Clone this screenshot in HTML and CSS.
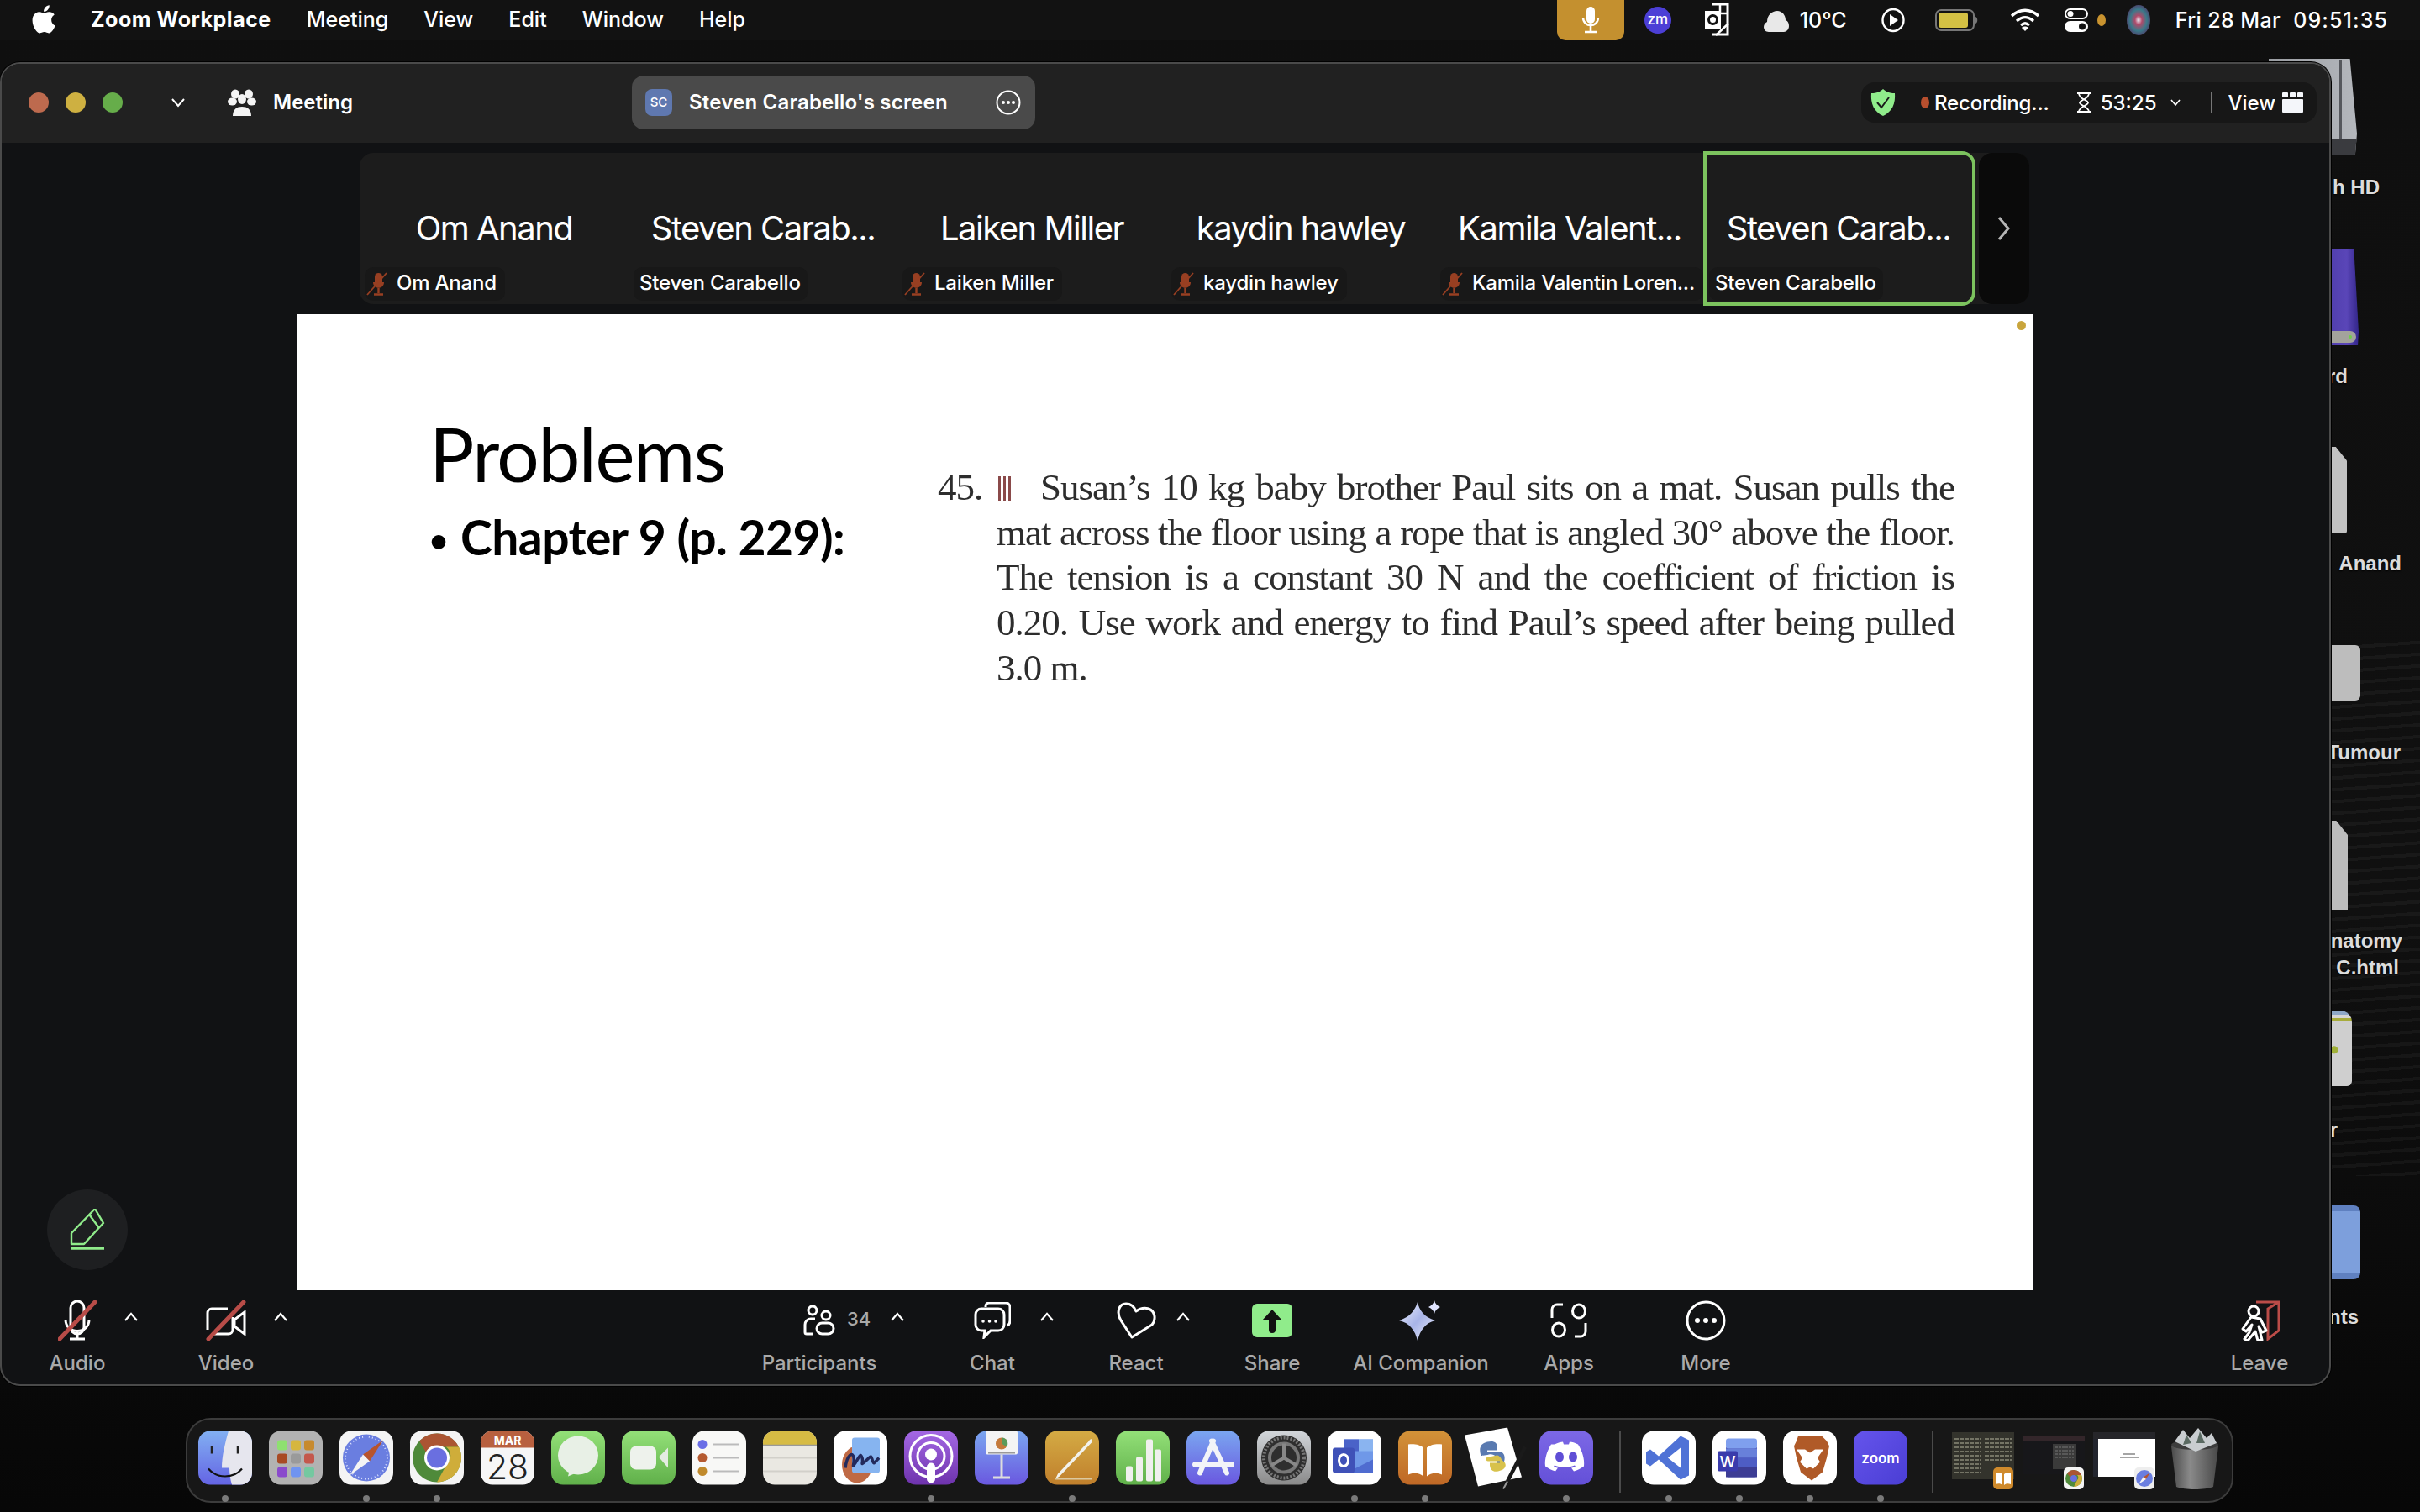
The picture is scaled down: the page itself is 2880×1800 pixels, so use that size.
FILE: index.html
```html
<!DOCTYPE html>
<html lang="en">
<head>
<meta charset="utf-8">
<title>Zoom Workplace</title>
<link rel="stylesheet" href="styles.css">
</head>
<body>
<div class="screen">
  <header class="menubar">
    <svg class="apple" width="30" height="34" viewBox="4 1 16 21"><path fill="#fff" d="M17.05 12.04c-.03-2.6 2.12-3.85 2.22-3.91-1.21-1.77-3.09-2.01-3.76-2.04-1.6-.16-3.12.94-3.93.94-.81 0-2.06-.92-3.39-.89-1.74.03-3.35 1.01-4.25 2.57-1.81 3.14-.46 7.79 1.3 10.34.86 1.25 1.89 2.65 3.24 2.6 1.3-.05 1.79-.84 3.36-.84 1.57 0 2.01.84 3.38.81 1.4-.02 2.28-1.27 3.14-2.53.99-1.45 1.4-2.85 1.42-2.93-.03-.01-2.72-1.04-2.75-4.13zM14.47 4.4c.72-.87 1.2-2.08 1.07-3.28-1.03.04-2.28.69-3.02 1.55-.66.77-1.24 2-1.09 3.18 1.15.09 2.32-.58 3.04-1.45z"/></svg>
    <nav class="menus">
      <span class="menu-app">Zoom Workplace</span>
      <span>Meeting</span><span>View</span><span>Edit</span><span>Window</span><span>Help</span>
    </nav>
    <div class="status">
      <div class="mic-pill"><svg width="24" height="32" viewBox="0 0 24 32"><rect x="7" y="0" width="10" height="20" rx="5" fill="#fff"/><path d="M3 13c0 12 18 12 18 0" fill="none" stroke="#fff" stroke-width="2.4"/><path d="M12 23v7M5 30h14" stroke="#fff" stroke-width="2.6"/></svg></div>
      <span class="zm">zm</span>
      <svg class="st-outlook" width="32" height="40" viewBox="0 0 32 40"><path d="M10 1h18v36H10" fill="none" stroke="#fff" stroke-width="3"/><path d="M12 12h16M19 1v11M14 38L29 24" stroke="#fff" stroke-width="2.5"/><rect x="1" y="9" width="19" height="21" fill="#fff"/><circle cx="10.500" cy="19.500" r="5" fill="none" stroke="#111" stroke-width="3"/></svg>
      <svg class="st-cloud" width="32" height="30" viewBox="0 0 32 30"><path fill="#e8e8e8" d="M7 29c-4 0-6-3-6-6 0-3 2-5 4-6 0-8 6-13 12-13 6 0 10 5 10 11 3 1 4 4 4 7 0 4-3 7-6 7z"/></svg>
      <span class="st-temp">10°C</span>
      <svg class="st-play" width="28" height="40" viewBox="0 0 28 40"><ellipse cx="14" cy="20" rx="12.500" ry="13" fill="none" stroke="#fff" stroke-width="2.4"/><path d="M10 13l10 7-10 7z" fill="#fff"/></svg>
      <svg class="st-batt" width="52" height="26" viewBox="0 0 52 26"><rect x="1" y="1" width="45" height="24" rx="6" fill="none" stroke="#777" stroke-width="2"/><rect x="4" y="4" width="35" height="18" rx="3" fill="#d4c144"/><path d="M48 9c3 1 3 7 0 8z" fill="#777"/></svg>
      <svg class="st-wifi" width="36" height="28" viewBox="0 0 36 28"><path d="M2 9c10-9 22-9 32 0M8 15c7-6 13-6 20 0M13 20c4-3 6-3 10 0" fill="none" stroke="#fff" stroke-width="3.400"/><path d="M18 27l-4-4c2-2 6-2 8 0z" fill="#fff"/></svg>
      <svg class="st-cc" width="28" height="28" viewBox="0 0 28 28"><rect x="1" y="1" width="26" height="11" rx="5.500" fill="none" stroke="#fff" stroke-width="2"/><circle cx="7" cy="6.500" r="3.500" fill="#fff"/><rect x="0" y="15" width="28" height="13" rx="6.500" fill="#fff"/><circle cx="21" cy="21.500" r="4" fill="#111"/></svg>
      <span class="st-dot"></span>
      <svg class="st-siri" width="28" height="38" viewBox="0 0 28 38"><defs><radialGradient id="siri"><stop offset="0" stop-color="#e8e8f0"/><stop offset=".3" stop-color="#b04a6a"/><stop offset=".7" stop-color="#3a7a8a"/><stop offset="1" stop-color="#4a4a70"/></radialGradient></defs><ellipse cx="14" cy="19" rx="14" ry="18" fill="url(#siri)"/></svg>
      <span class="st-date">Fri 28 Mar</span>
      <span class="st-time">09:51:35</span>
    </div>
  </header>

  <div class="desk-item hd"><i class="hd-plate"></i><i class="hd-foot"></i></div>
  <div class="desk-label lb-hd">h HD</div>
  <div class="desk-item drive"><i class="drive-foot"></i><i class="drive-led"></i></div>
  <div class="desk-label lb-rd">rd</div>
  <div class="desk-item doc-a"></div>
  <div class="desk-label lb-anand">Anand</div>
  <div class="desk-item sq"></div>
  <div class="desk-label lb-tum">Tumour</div>
  <div class="desk-item doc-b"></div>
  <div class="desk-label lb-nat">natomy</div>
  <div class="desk-label lb-cht">C.html</div>
  <div class="desk-item stack"></div>
  <div class="desk-label lb-r">r</div>
  <div class="desk-item folder"></div>
  <div class="desk-label lb-nts">nts</div>

  <main class="window">
    <div class="titlebar">
      <div class="title-left">
        <span class="light red"></span><span class="light yellow"></span><span class="light green"></span>
        <svg class="t-chev" width="18" height="12" viewBox="0 0 18 12"><path d="M2 2l7 8 7-8" fill="none" stroke="#fff" stroke-width="2"/></svg>
        <svg class="t-paw" width="34" height="32" viewBox="0 0 34 32"><g fill="#f4f4f4"><ellipse cx="9" cy="6" rx="5" ry="5.500"/><ellipse cx="25" cy="6" rx="5" ry="5.500"/><ellipse cx="17" cy="12" rx="5" ry="6"/><ellipse cx="5.500" cy="15" rx="5.500" ry="4.500"/><ellipse cx="28.500" cy="15" rx="5.500" ry="4.500"/><path d="M6 32c0-8 5-11 11-11s11 3 11 11z"/></g></svg>
        <span class="t-meeting">Meeting</span>
      </div>
      <div class="share-pill">
        <span class="avatar">SC</span>
        <span class="share-name">Steven Carabello's screen</span>
        <svg class="share-more" width="30" height="30" viewBox="0 0 30 30"><circle cx="15" cy="15" r="13.500" fill="none" stroke="#fff" stroke-width="2"/><circle cx="9" cy="15" r="2" fill="#fff"/><circle cx="15" cy="15" r="2" fill="#fff"/><circle cx="21" cy="15" r="2" fill="#fff"/></svg>
      </div>
      <div class="rec-pill">
        <svg class="shield" width="30" height="32" viewBox="0 0 30 32"><path d="M15 0c3 3 8 5 14 5 1 12-3 22-14 27C4 27 0 17 1 5c6 0 11-2 14-5z" fill="#90ec8b"/><path d="M8 16l5 6 9-12" fill="none" stroke="#1a1a1a" stroke-width="2"/></svg>
        <span class="rec-dot"></span>
        <span class="rec-text">Recording...</span>
        <svg class="hour" width="18" height="26" viewBox="0 0 18 24"><path d="M1 1h16M1 23h16M3 1c0 7 10 8 11 11S3 17 3 23M15 1c0 7-10 8-11 11s11 5 11 11" fill="none" stroke="#fff" stroke-width="1.800"/></svg>
        <span class="rec-time">53:25</span>
        <svg class="rec-chev" width="12" height="8" viewBox="0 0 12 8"><path d="M1 1l5 6 5-6" fill="none" stroke="#fff" stroke-width="1.600"/></svg>
        <span class="rec-div"></span>
        <span class="rec-view">View</span>
        <svg class="rec-grid" width="25" height="24" viewBox="0 0 25 24"><g fill="#f4f6fa"><rect width="7" height="6" rx="1"/><rect x="9" width="7" height="6" rx="1"/><rect x="18" width="7" height="6" rx="1"/><rect y="8" width="25" height="16" rx="1"/></g></svg>
      </div>
    </div>

    <div class="stage">
      <div class="strip">
        <div class="tile">
          <div class="tile-name">Om Anand</div>
          <div class="tile-label"><svg class="muted" width="26" height="28" viewBox="0 0 26 28"><use href="#mutedmic"/></svg><span>Om Anand</span></div>
        </div>
        <div class="tile">
          <div class="tile-name">Steven Carab...</div>
          <div class="tile-label plain"><span>Steven Carabello</span></div>
        </div>
        <div class="tile">
          <div class="tile-name">Laiken Miller</div>
          <div class="tile-label"><svg class="muted" width="26" height="28" viewBox="0 0 26 28"><use href="#mutedmic"/></svg><span>Laiken Miller</span></div>
        </div>
        <div class="tile">
          <div class="tile-name">kaydin hawley</div>
          <div class="tile-label"><svg class="muted" width="26" height="28" viewBox="0 0 26 28"><use href="#mutedmic"/></svg><span>kaydin hawley</span></div>
        </div>
        <div class="tile">
          <div class="tile-name">Kamila Valent...</div>
          <div class="tile-label"><svg class="muted" width="26" height="28" viewBox="0 0 26 28"><use href="#mutedmic"/></svg><span>Kamila Valentin Loren...</span></div>
        </div>
        <div class="tile active">
          <div class="tile-name">Steven Carab...</div>
          <div class="tile-label plain"><span>Steven Carabello</span></div>
        </div>
        <div class="strip-next"><svg width="16" height="30" viewBox="0 0 16 30"><path d="M2 2l11 13L2 28" fill="none" stroke="#b5b5b5" stroke-width="3"/></svg></div>
      </div>

      <div class="slide">
        <span class="slide-dot"></span>
        <div class="slide-left">
          <div class="slide-title">Problems</div>
          <div class="slide-bullet"><span class="bul">•</span>Chapter 9 (p. 229):</div>
        </div>
        <div class="slide-right">
          <div class="ln first"><span class="num">45.</span><span class="bars"><i></i></span>Susan’s 10 kg baby brother Paul sits on a mat. Susan pulls the</div>
          <div class="ln">mat across the floor using a rope that is angled 30° above the floor.</div>
          <div class="ln">The tension is a constant 30 N and the coefficient of friction is</div>
          <div class="ln">0.20. Use work and energy to find Paul’s speed after being pulled</div>
          <div class="ln last">3.0 m.</div>
        </div>
      </div>

      <div class="pen-btn"><svg width="44" height="50" viewBox="0 0 44 50"><path d="M31 1l10 17-23 25H3V30z M25 9l11 15" fill="none" stroke="#90ec8b" stroke-width="2.400" stroke-linejoin="round" transform="translate(0 -1)"/><path d="M2 47h40" stroke="#90ec8b" stroke-width="3.500"/></svg></div>
    </div>

    <div class="toolbar">
      <div class="tool w-audio">
        <div class="tool-icon">
          <svg width="46" height="48" viewBox="0 0 46 48"><path d="M15 32V9a8 8 0 0 1 16 0v23a8 8 0 0 1-16 0z" fill="none" stroke="#fff" stroke-width="3"/><path d="M9 23c0 18 28 18 28 0M23 37v9M14 46h18" fill="none" stroke="#fff" stroke-width="3"/><path d="M2 46L44 2" stroke="#b84c48" stroke-width="5" stroke-linecap="round"/></svg>
          <svg class="chev chev-audio" width="18" height="12" viewBox="0 0 18 12"><path d="M2 10l7-8 7 8" fill="none" stroke="#fff" stroke-width="2.200"/></svg>
        </div>
        <div class="tool-label">Audio</div>
      </div>
      <div class="tool w-video">
        <div class="tool-icon">
          <svg width="48" height="48" viewBox="0 0 48 48"><path d="M26 10h-19a5 5 0 0 0-5 5v20M8 40h19a5 5 0 0 0 5-5V20M46 14v26L34 31V23z" fill="none" stroke="#fff" stroke-width="3"/><path d="M3 46L45 2" stroke="#b84c48" stroke-width="5" stroke-linecap="round"/></svg>
          <svg class="chev chev-video" width="18" height="12" viewBox="0 0 18 12"><path d="M2 10l7-8 7 8" fill="none" stroke="#fff" stroke-width="2.200"/></svg>
        </div>
        <div class="tool-label">Video</div>
      </div>
      <div class="center-tools">
        <div class="tool w-part">
          <div class="tool-icon">
            <svg width="38" height="36" viewBox="0 0 38 36"><circle cx="11" cy="6" r="5" fill="none" stroke="#fff" stroke-width="3"/><circle cx="27" cy="12" r="5" fill="none" stroke="#fff" stroke-width="3"/><path d="M14 16H9a7 7 0 0 0-7 7v9a2 2 0 0 0 2 2h8" fill="none" stroke="#fff" stroke-width="3"/><rect x="16" y="21" width="20" height="13" rx="6.500" fill="none" stroke="#fff" stroke-width="3"/></svg>
            <span class="tool-count">34</span>
            <svg class="chev chev-part" width="18" height="12" viewBox="0 0 18 12"><path d="M2 10l7-8 7 8" fill="none" stroke="#fff" stroke-width="2.200"/></svg>
          </div>
          <div class="tool-label">Participants</div>
        </div>
        <div class="tool w-chat">
          <div class="tool-icon">
            <svg width="44" height="44" viewBox="0 0 44 44"><path d="M14 6V5a4 4 0 0 1 4-4h20a5 5 0 0 1 5 5v16c0 3-1 5-3 6" fill="none" stroke="#fff" stroke-width="3"/><path d="M9 8h20a7 7 0 0 1 7 7v12a7 7 0 0 1-7 7H20l-8 8 1-8H9a7 7 0 0 1-7-7V15a7 7 0 0 1 7-7z" fill="none" stroke="#fff" stroke-width="3"/><circle cx="11" cy="23" r="1.800" fill="#fff"/><circle cx="18.500" cy="23" r="1.800" fill="#fff"/><circle cx="26" cy="23" r="1.800" fill="#fff"/></svg>
            <svg class="chev chev-chat" width="18" height="12" viewBox="0 0 18 12"><path d="M2 10l7-8 7 8" fill="none" stroke="#fff" stroke-width="2.200"/></svg>
          </div>
          <div class="tool-label">Chat</div>
        </div>
        <div class="tool w-react">
          <div class="tool-icon">
            <svg width="48" height="44" viewBox="0 0 48 44"><path d="M19 42L6 22C0 12 4 2 12 2c6 0 10 4 12 9 4-3 9-5 15-3 8 3 9 13 4 19z" fill="none" stroke="#fff" stroke-width="3" stroke-linejoin="round"/></svg>
            <svg class="chev chev-react" width="18" height="12" viewBox="0 0 18 12"><path d="M2 10l7-8 7 8" fill="none" stroke="#fff" stroke-width="2.200"/></svg>
          </div>
          <div class="tool-label">React</div>
        </div>
        <div class="tool w-share">
          <div class="tool-icon">
            <svg width="48" height="40" viewBox="0 0 48 40"><rect width="48" height="40" rx="6" fill="#90ec8b"/><path d="M24 7l12 13h-8v11a3 3 0 0 1-8 0V20h-8z" fill="#111"/></svg>
          </div>
          <div class="tool-label">Share</div>
        </div>
        <div class="tool w-ai">
          <div class="tool-icon">
            <svg width="54" height="48" viewBox="0 0 54 48"><defs><linearGradient id="aig" x1="0" y1="0" x2="1" y2="1"><stop offset="0" stop-color="#f2f4ff"/><stop offset=".5" stop-color="#a8b4e8"/><stop offset="1" stop-color="#eef0fa"/></linearGradient></defs><path d="M23 2c2 10 8 18 21 22-12 3-18 12-21 24-3-12-9-21-22-24C14 20 20 12 23 2z" fill="url(#aig)"/><path d="M43 0c1 4 3 6 7 8-4 2-6 4-7 8-1-4-3-6-7-8 4-2 6-4 7-8z" fill="#dfe4ff"/></svg>
          </div>
          <div class="tool-label">AI Companion</div>
        </div>
        <div class="tool w-apps">
          <div class="tool-icon">
            <svg width="44" height="42" viewBox="0 0 44 42"><path d="M2 18V8a6 6 0 0 1 6-6h7M42 24v10a6 6 0 0 1-6 6h-7" fill="none" stroke="#fff" stroke-width="3"/><ellipse cx="34" cy="10" rx="7.500" ry="8" fill="none" stroke="#fff" stroke-width="3"/><ellipse cx="10" cy="32" rx="7.500" ry="8" fill="none" stroke="#fff" stroke-width="3"/></svg>
          </div>
          <div class="tool-label">Apps</div>
        </div>
        <div class="tool w-more">
          <div class="tool-icon">
            <svg width="48" height="48" viewBox="0 0 48 48"><circle cx="24" cy="24" r="22" fill="none" stroke="#fff" stroke-width="3"/><circle cx="14" cy="24" r="3" fill="#fff"/><circle cx="24" cy="24" r="3" fill="#fff"/><circle cx="34" cy="24" r="3" fill="#fff"/></svg>
          </div>
          <div class="tool-label">More</div>
        </div>
      </div>
      <div class="tool w-leave">
        <div class="tool-icon">
          <svg width="48" height="48" viewBox="0 0 48 48"><path d="M20 2h27v34L34 46V10L47 2" fill="none" stroke="#bb4c48" stroke-width="3"/><circle cx="17" cy="13" r="6" fill="none" stroke="#fff" stroke-width="3"/><path d="M14 20l-10 14 4 3 7-8-3 9-6 8 4 2 9-11 3 11 5-1-4-16 4 7 5-2-7-14z" fill="none" stroke="#fff" stroke-width="3" stroke-linejoin="round"/></svg>
        </div>
        <div class="tool-label">Leave</div>
      </div>
    </div>
  </main>

  <footer class="dock">
    <div class="app"><svg viewBox="0 0 64 64"><defs><linearGradient id="fb" x1="0" y1="0" x2="0" y2="1"><stop offset="0" stop-color="#82b0f2"/><stop offset="1" stop-color="#6464e4"/></linearGradient></defs><rect width="64" height="64" rx="14" fill="url(#fb)"/><path d="M36 0h14a14 14 0 0 1 14 14v36a14 14 0 0 1-14 14H40c-2-6-3-14-3-20H28c0-14 4-30 8-44z" fill="#e6e6ee"/><path d="M16 18v9M47 18v9" stroke="#222" stroke-width="2.500"/><path d="M12 45c10 12 30 12 40 0" fill="none" stroke="#111" stroke-width="2.200"/></svg><i class="run"></i></div>
    <div class="app"><svg viewBox="0 0 64 64"><rect width="64" height="64" rx="14" fill="#b2b2b2"/><g><rect x="10" y="11" width="12" height="12" rx="3" fill="#8ee070"/><rect x="26" y="11" width="12" height="12" rx="3" fill="#d6b63e"/><rect x="42" y="11" width="12" height="12" rx="3" fill="#c78a2e"/><rect x="10" y="27" width="12" height="12" rx="3" fill="#a84a24"/><rect x="26" y="27" width="12" height="12" rx="3" fill="#9a9a9a"/><rect x="42" y="27" width="12" height="12" rx="3" fill="#c4584c"/><rect x="10" y="43" width="12" height="12" rx="3" fill="#8a4acc"/><rect x="26" y="43" width="12" height="12" rx="3" fill="#7094f0"/><rect x="42" y="43" width="12" height="12" rx="3" fill="#74c8a0"/></g></svg></div>
    <div class="app"><svg viewBox="0 0 64 64"><rect width="64" height="64" rx="14" fill="#f4f4f4"/><ellipse cx="32" cy="32" rx="28" ry="28" fill="#6a7ee0"/><circle cx="32" cy="32" r="25" fill="none" stroke="#dfe5ff" stroke-width="2" stroke-dasharray="1 3"/><path d="M52 11L36 36 28 28z" fill="#b8542c"/><path d="M12 53l16-25 8 8z" fill="#f4f4f4"/></svg><i class="run"></i></div>
    <div class="app"><svg viewBox="0 0 64 64"><rect width="64" height="64" rx="14" fill="#f4f4f4"/><circle cx="32" cy="32" r="29" fill="#4f8a3a"/><path d="M32 3a29 29 0 0 1 26 16H32a13 13 0 0 0-12 8L11 12A29 29 0 0 1 32 3z" fill="#ab5533"/><path d="M58 19a29 29 0 0 1-26 42l12-22a13 13 0 0 0-1-20z" fill="#cfad3a"/><circle cx="32" cy="32" r="15" fill="#fff"/><circle cx="32" cy="32" r="12" fill="#6a6fe0"/></svg><i class="run"></i></div>
    <div class="app"><svg viewBox="0 0 64 64"><rect width="64" height="64" rx="14" fill="#f6f6f6"/><path d="M0 20V14A14 14 0 0 1 14 0h36a14 14 0 0 1 14 14v6z" fill="#b8603f"/><text x="32" y="16" text-anchor="middle" class="cal-mon">MAR</text><text x="32" y="57" text-anchor="middle" class="cal-day">28</text></svg></div>
    <div class="app"><svg viewBox="0 0 64 64"><defs><linearGradient id="gr" x1="0" y1="0" x2="0" y2="1"><stop offset="0" stop-color="#93e078"/><stop offset="1" stop-color="#60b04a"/></linearGradient></defs><rect width="64" height="64" rx="14" fill="url(#gr)"/><ellipse cx="32" cy="29" rx="24" ry="23" fill="#e8f0e6"/><path d="M22 46l-2 8 12-5z" fill="#e8f0e6"/></svg></div>
    <div class="app"><svg viewBox="0 0 64 64"><rect width="64" height="64" rx="14" fill="url(#gr)"/><rect x="10" y="18" width="31" height="28" rx="7" fill="#eef2ec"/><path d="M44 31l11-11v24z" fill="#e4ece2"/></svg></div>
    <div class="app"><svg viewBox="0 0 64 64"><rect width="64" height="64" rx="14" fill="#f8f8f6"/><circle cx="12" cy="16" r="5.500" fill="#6a6ee6"/><circle cx="12" cy="32" r="5.500" fill="#b55a30"/><circle cx="12" cy="48" r="5.500" fill="#c08a2c"/><path d="M24 16h32M24 32h32M24 48h32" stroke="#bbb" stroke-width="2"/></svg></div>
    <div class="app"><svg viewBox="0 0 64 64"><rect width="64" height="64" rx="14" fill="#eae8e2"/><path d="M0 17V14A14 14 0 0 1 14 0h36a14 14 0 0 1 14 14v3z" fill="#d6bb44"/><path d="M0 17h64" stroke="#999" stroke-width="1.500"/><path d="M0 32h64M0 48h64" stroke="#d2d0ca" stroke-width="2"/></svg></div>
    <div class="app"><svg viewBox="0 0 64 64"><rect width="64" height="64" rx="14" fill="#fff"/><ellipse cx="28" cy="40" rx="18" ry="22" fill="#bf6a45"/><rect x="22" y="8" width="33" height="42" rx="3" fill="#86b4f0"/><path d="M14 44c2-16 9-20 10-12s-3 14 2 6 6-12 8-6-3 10 4 4 6-8 8-2 1 6 8-2" fill="none" stroke="#232a5c" stroke-width="3.500"/></svg></div>
    <div class="app"><svg viewBox="0 0 64 64"><defs><linearGradient id="pu" x1="0" y1="0" x2="0" y2="1"><stop offset="0" stop-color="#a468e4"/><stop offset="1" stop-color="#6e33ad"/></linearGradient></defs><rect width="64" height="64" rx="14" fill="url(#pu)"/><circle cx="32" cy="30" r="25" fill="none" stroke="#fff" stroke-width="3"/><circle cx="32" cy="30" r="16" fill="none" stroke="#fff" stroke-width="3"/><circle cx="32" cy="28" r="7" fill="#fff"/><rect x="27" y="38" width="10" height="24" rx="5" fill="#fff"/></svg><i class="run"></i></div>
    <div class="app"><svg viewBox="0 0 64 64"><defs><linearGradient id="bl" x1="0" y1="0" x2="0" y2="1"><stop offset="0" stop-color="#7aa6f0"/><stop offset="1" stop-color="#6a58e0"/></linearGradient></defs><rect width="64" height="64" rx="14" fill="url(#bl)"/><rect x="13" y="0" width="38" height="28" rx="2" fill="#f4f4f4"/><circle cx="32" cy="15" r="7" fill="#c47a3c"/><path d="M32 15V8a7 7 0 0 1 6 11z" fill="#5a9a5a"/><path d="M16 26h32" stroke="#999" stroke-width="2"/><path d="M32 28v28" stroke="#ddd" stroke-width="3"/><rect x="22" y="54" width="20" height="3" fill="#ddd"/></svg></div>
    <div class="app"><svg viewBox="0 0 64 64"><defs><linearGradient id="or" x1="0" y1="0" x2="0" y2="1"><stop offset="0" stop-color="#d4ab44"/><stop offset="1" stop-color="#c07f2c"/></linearGradient></defs><rect width="64" height="64" rx="14" fill="url(#or)"/><path d="M52 12c2-4 5-2 3 2L17 54l-5 3 3-6z" fill="#f2f2ec"/><path d="M12 57h44" stroke="#dcc9a0" stroke-width="2"/></svg><i class="run"></i></div>
    <div class="app"><svg viewBox="0 0 64 64"><rect width="64" height="64" rx="14" fill="url(#gr)"/><rect x="12" y="42" width="8" height="18" rx="2" fill="#f0f0ee"/><rect x="24" y="31" width="8" height="29" rx="2" fill="#f0f0ee"/><rect x="36" y="10" width="8" height="50" rx="2" fill="#f0f0ee"/><rect x="46" y="22" width="8" height="38" rx="2" fill="#f0f0ee"/></svg></div>
    <div class="app"><svg viewBox="0 0 64 64"><rect width="64" height="64" rx="14" fill="url(#bl)"/><path d="M32 12l-16 38M30 12l18 38M10 40h44" stroke="#f2f4f8" stroke-width="6" stroke-linecap="round" fill="none"/></svg></div>
    <div class="app"><svg viewBox="0 0 64 64"><defs><linearGradient id="gy" x1="0" y1="0" x2="0" y2="1"><stop offset="0" stop-color="#d2d6da"/><stop offset="1" stop-color="#8a8a8a"/></linearGradient></defs><rect width="64" height="64" rx="14" fill="url(#gy)"/><circle cx="32" cy="32" r="27" fill="#2e2e2e"/><circle cx="32" cy="32" r="24" fill="none" stroke="#777" stroke-width="4" stroke-dasharray="2 2"/><circle cx="32" cy="32" r="17" fill="none" stroke="#777" stroke-width="4"/><path d="M32 32V15M32 32l15 9M32 32l-15 9" stroke="#888" stroke-width="4"/></svg></div>
    <div class="app"><svg viewBox="0 0 64 64"><rect width="64" height="64" rx="14" fill="#fff"/><path d="M20 10h34v40H22z" fill="#6f98e8"/><path d="M20 10h17v14H20z" fill="#4a62c8"/><path d="M37 10h17v14H37z" fill="#8ab4f0"/><path d="M22 50l32-16v16z" fill="#4f6cd0"/><rect x="6" y="20" width="26" height="30" rx="3" fill="#3f51b8"/><ellipse cx="19" cy="35" rx="5.500" ry="7" fill="none" stroke="#fff" stroke-width="3"/></svg><i class="run"></i></div>
    <div class="app"><svg viewBox="0 0 64 64"><defs><linearGradient id="bk" x1="0" y1="0" x2="0" y2="1"><stop offset="0" stop-color="#d29238"/><stop offset="1" stop-color="#bf6826"/></linearGradient></defs><rect width="64" height="64" rx="14" fill="url(#bk)"/><path d="M30 20c-4-4-12-5-18-4v36c6-3 14-2 18 2zM34 20c4-4 12-5 18-4v36c-6-3-14-2-18 2z" fill="#fff"/></svg><i class="run"></i></div>
    <div class="app"><svg viewBox="0 0 64 64"><path d="M-5 5l51-9 17 59-52 11z" fill="#fff"/><path d="M22 13c8-2 12 1 12 7v3H22v2h15c6 0 7 8 4 14H33v-6c0-4-5-6-9-5s-9 2-10 0c-2-8 0-13 8-15z" fill="#5a7ab0"/><path d="M38 47c-7 3-12 1-13-6v-3h12v-2H23c-2 0-3-2-3-4l13-3c3 0 5 2 6 5l4 4c2 4 0 7-5 9z" fill="#d8c24c"/><path d="M67 19L46 60" stroke="#1a1a1a" stroke-width="4.500"/><path d="M46 60l-5 9" stroke="#999" stroke-width="2"/></svg></div>
    <div class="app"><svg viewBox="0 0 64 64"><defs><linearGradient id="dc" x1="0" y1="0" x2="0" y2="1"><stop offset="0" stop-color="#7c68e6"/><stop offset="1" stop-color="#6450d8"/></linearGradient></defs><rect width="64" height="64" rx="14" fill="url(#dc)"/><path d="M18 16c4-2 8-3 10-3l1 3c2 0 4 0 6 0l1-3c3 0 6 1 10 3 5 8 8 17 7 26-4 3-8 5-12 6l-3-4c2 0 3-1 5-2l-1-1c-8 3-16 3-24 0l-1 1c2 1 3 2 5 2l-3 4c-4-1-8-3-12-6-1-9 2-18 7-26z" fill="#fff"/><ellipse cx="24" cy="31" rx="5" ry="6" fill="#5f4ed6"/><ellipse cx="40" cy="31" rx="5" ry="6" fill="#5f4ed6"/></svg><i class="run"></i></div>
    <span class="dock-sep"></span>
    <div class="app"><svg viewBox="0 0 64 64"><rect width="64" height="64" rx="14" fill="#fff"/><path d="M46 6l10 5v42l-10 5-26-24-10 8-5-3V25l5-3 10 8z M46 20L31 32l15 12z" fill="#4f72d6" fill-rule="evenodd"/></svg><i class="run"></i></div>
    <div class="app"><svg viewBox="0 0 64 64"><rect width="64" height="64" rx="14" fill="#fff"/><rect x="16" y="18" width="37" height="37" rx="3" fill="#4b52b4"/><rect x="16" y="9" width="37" height="12" rx="3" fill="#7f9fee"/><rect x="16" y="21" width="37" height="11" fill="#6880da"/><rect x="16" y="32" width="37" height="11" fill="#4e5dc4"/><rect x="16" y="43" width="37" height="12" fill="#3d3d94"/><rect x="6" y="24" width="24" height="24" rx="2" fill="#3a3bac"/><text x="18" y="43" text-anchor="middle" class="word-w">W</text></svg><i class="run"></i></div>
    <div class="app"><svg viewBox="0 0 64 64"><rect width="64" height="64" rx="14" fill="#fff"/><path d="M18 6h28l6 6 3 6-3 14-5 17-13 10-13-10-5-17-3-14 3-6z" fill="#b05a28"/><path d="M16 22h10l6 4 6-4h10l-7 10 3 5-12 12-12-12 3-5z" fill="#fff"/><path d="M26 46l6-3 6 3-6 5z" fill="#b05a28"/></svg><i class="run"></i></div>
    <div class="app"><svg viewBox="0 0 64 64"><defs><linearGradient id="zm" x1="0" y1="0" x2="1" y2="1"><stop offset="0" stop-color="#6554ec"/><stop offset="1" stop-color="#4a3ed4"/></linearGradient></defs><rect width="64" height="64" rx="14" fill="url(#zm)"/><text x="32" y="38" text-anchor="middle" class="zoom-word">zoom</text></svg><i class="run"></i></div>
    <span class="dock-sep sep2"></span>
    <div class="app thumb"><svg viewBox="0 0 74 68"><rect y="0" width="74" height="56" fill="#33332c"/><path d="M3 8h32M3 13h32M3 18h32M3 23h32M3 28h32M3 33h32M3 38h32M3 43h32M3 48h32M39 8h32M39 13h32M39 18h32M39 23h32M39 28h32M39 33h32" stroke="#8a8a78" stroke-width="1.500" stroke-dasharray="5 1"/><g transform="translate(49 42)"><rect width="24" height="26" rx="5" fill="#cf8a2c"/><path d="M11 8c-2-2-5-2-8-2v14c3-1 6-1 8 1zM13 8c2-2 5-2 8-2v14c-3-1-6-1-8 1z" fill="#fff"/></g></svg></div>
    <div class="app thumb"><svg viewBox="0 0 74 68"><rect y="4" width="74" height="46" fill="#17171a"/><rect y="4" width="74" height="7" fill="#33262a"/><rect x="36" y="14" width="28" height="30" fill="#3a3a3a"/><path d="M39 18h22M39 22h22M39 26h22M39 30h22" stroke="#777" stroke-width="1" stroke-dasharray="3 1"/><g transform="translate(49 42)"><rect width="24" height="26" rx="5" fill="#f4f4f4"/><circle cx="12" cy="13" r="10" fill="#4f8a3a"/><path d="M12 3a10 10 0 0 1 9 6H12a4 4 0 0 0-4 3L4 7a10 10 0 0 1 8-4z" fill="#ab5533"/><path d="M21 9a10 10 0 0 1-9 14l4-8a4 4 0 0 0 0-6z" fill="#cfad3a"/><circle cx="12" cy="13" r="4" fill="#6a6fe0"/></g></svg></div>
    <div class="app thumb"><svg viewBox="0 0 74 68"><rect y="0" width="74" height="8" fill="#26262a"/><rect y="8" width="74" height="45" fill="#fff"/><rect y="8" width="6" height="45" fill="#22252e"/><path d="M36 26h14M32 30h22" stroke="#888" stroke-width="1.500"/><g transform="translate(49 42)"><rect width="24" height="26" rx="5" fill="#eee"/><circle cx="12" cy="13" r="10" fill="#6a7ee0"/><path d="M19 6L13 15 10 12z" fill="#b8542c"/><path d="M5 20l6-9 3 3z" fill="#f4f4f4"/></g></svg></div>
    <div class="app app-trash"><svg viewBox="0 0 64 76"><defs><linearGradient id="tr" x1="0" y1="0" x2="1" y2="0"><stop offset="0" stop-color="#4a4a4a"/><stop offset=".4" stop-color="#8a8a8a"/><stop offset="1" stop-color="#484848"/></linearGradient></defs><path d="M4 24h56l-6 48c-10 4-34 4-44 0z" fill="url(#tr)"/><ellipse cx="32" cy="22" rx="28" ry="6" fill="#3d3d3d"/><path d="M8 18l10-14 8 10 10-12 10 12 6-6 6 12-25 10z" fill="#c9cdd0"/><path d="M22 10l6 10-10 2zM38 6l6 14-10 0z" fill="#5a6a62"/></svg></div>
  </footer>

  <svg class="sprite" width="0" height="0"><defs><g id="mutedmic"><rect x="10" y="1" width="9" height="15" rx="4.500" fill="#983f22"/><path d="M8 12c0 9 13 9 13 0z" fill="#983f22"/><path d="M14.500 19v6M9 26.500h11" stroke="#983f22" stroke-width="2.400"/><path d="M1 27L24 1" stroke="#983f22" stroke-width="1.800"/></g></defs></svg>
</div>
</body>
</html>
```

FILE: styles.css
```css
* { box-sizing: border-box; }
html, body { margin: 0; padding: 0; background: #0a0a0a; }
body { font-family: Inter, "Noto Sans", "Liberation Sans", sans-serif; color: #fff; overflow: hidden; }

.screen {
  position: relative;
  width: 2880px;
  height: 1800px;
  overflow: hidden;
  background:
    repeating-linear-gradient(176deg, rgba(255,255,255,0) 0 10px, rgba(255,255,255,.04) 10px 14px) 2775px 760px / 105px 640px no-repeat,
    linear-gradient(180deg, #0f0f0f 0%, #101010 60%, #070707 100%);
}
.sprite { position: absolute; }

/* menu bar */
.menubar { display: flex; align-items: center; height: 48px; background: #121212; padding-left: 38px; }
.apple { flex: none; margin-top: -2px; }
.menus { display: flex; margin-left: 40px; font-size: 25px; font-weight: 500; gap: 42px; margin-top: -2px; }
.menu-app { font-weight: 700; letter-spacing: .5px; }
.status { display: flex; align-items: center; margin-left: auto; padding-right: 38px; height: 48px; font-size: 25px; font-weight: 500; }
.mic-pill { width: 80px; height: 48px; background: #c4902f; border-radius: 0 0 10px 10px; display: flex; align-items: center; justify-content: center; }
.zm { width: 32px; height: 32px; margin-left: 24px; border-radius: 50%; background: #4c3fd6; font-size: 17px; line-height: 30px; text-align: center; }
.st-outlook { margin-left: 39px; }
.st-cloud { margin-left: 38px; }
.st-temp { margin-left: 12px; }
.st-play { margin-left: 41px; }
.st-batt { margin-left: 36px; }
.st-wifi { margin-left: 37px; }
.st-cc { margin-left: 29px; }
.st-dot { width: 10px; height: 14px; border-radius: 50%; background: #c9932f; margin-left: 11px; }
.st-siri { margin-left: 25px; }
.st-date { margin-left: 30px; letter-spacing: .4px; }
.st-time { margin-left: 15px; letter-spacing: 1.1px; }

/* desktop items */
.desk-item { position: absolute; display: block; }
.desk-label { position: absolute; right: 0; font-family: "Liberation Sans", sans-serif; font-weight: 700; font-size: 24px; line-height: 30px; color: #dcdcdc; text-shadow: 0 1px 2px #000; }
.hd { left: 2700px; top: 70px; width: 105px; height: 114px; background: linear-gradient(90deg, #9a9da2, #b4b7bc); clip-path: polygon(0 0, 92% 0, 100% 78%, 98% 100%, 0 100%); }
.hd-plate { position: absolute; left: 0; right: 0; bottom: 0; height: 18px; background: #3a3b3f; }
.hd-foot { position: absolute; right: 18px; top: 2px; bottom: 18px; width: 3px; background: #55575c; }
.drive { left: 2760px; top: 297px; width: 47px; height: 114px; background: linear-gradient(90deg, #4a3aa6, #5a46b8 70%, #33268a); clip-path: polygon(0 0, 88% 0, 100% 86%, 98% 100%, 0 100%); }
.drive-foot { position: absolute; left: 0; right: 3px; bottom: 3px; height: 14px; background: #a3a39c; border-radius: 0 8px 8px 0; }
.drive-led { position: absolute; right: 8px; bottom: 8px; width: 4px; height: 4px; border-radius: 50%; background: #6fd04a; }
.doc-a { left: 2760px; top: 532px; width: 33px; height: 103px; background: #c2c2c2; border-radius: 0 0 3px 0; clip-path: polygon(0 0, 60% 0, 100% 16%, 100% 100%, 0 100%); }
.sq { left: 2760px; top: 768px; width: 49px; height: 66px; background: #bdbdbd; border-radius: 6px; }
.doc-b { left: 2760px; top: 977px; width: 34px; height: 106px; background: #bcbcbc; clip-path: polygon(0 0, 60% 0, 100% 16%, 100% 100%, 0 100%); }
.stack { left: 2760px; top: 1203px; width: 39px; height: 90px; background: radial-gradient(circle at 46% 52%, #a0b038 0 4px, transparent 5px), linear-gradient(180deg, #8ea8c8 0 6%, #d6d6d6 6% 10%, #a8ac3c 10% 13%, #cfcfcf 13%); border-radius: 0 14px 6px 0; }
.folder { left: 2760px; top: 1435px; width: 49px; height: 88px; background: linear-gradient(180deg, #5f80c0 0 8%, #7d9fdc 8% 92%, #5f80c0 92%); border-radius: 8px; }
.lb-hd { right: 48px; top: 208px; }
.lb-rd { right: 86px; top: 433px; }
.lb-anand { right: 22px; top: 656px; }
.lb-tum { right: 23px; top: 881px; }
.lb-nat { right: 21px; top: 1105px; }
.lb-cht { right: 25px; top: 1137px; }
.lb-r { right: 98px; top: 1330px; }
.lb-nts { right: 73px; top: 1553px; }

/* window */
.window {
  position: absolute; left: 0; top: 74px; width: 2774px; height: 1576px;
  display: flex; flex-direction: column;
  background: #111214;
  border: 2px solid #4a4a4a; border-radius: 24px;
  box-shadow: 0 0 0 1px #000;
  overflow: hidden;
}
.titlebar { display: flex; align-items: center; height: 94px; padding-bottom: 2px; background: #212121; flex: none; }
.title-left { display: flex; align-items: center; width: 750px; padding-left: 32px; }
.light { width: 24px; height: 24px; border-radius: 50%; margin-right: 20px; }
.red { background: #bd6a4e; } .yellow { background: #ceb041; } .green { background: #66ad4a; margin-right: 0; }
.t-chev { margin-left: 57px; }
.t-paw { margin-left: 50px; }
.t-meeting { margin: -1px 0 0 20px; font-size: 24px; font-weight: 600; }
.share-pill { display: flex; align-items: center; width: 480px; height: 64px; border-radius: 14px; background: #4a4a4a; padding-left: 16px; }
.avatar { width: 32px; height: 32px; border-radius: 8px; background: #5f78b0; font-size: 15px; line-height: 32px; text-align: center; font-weight: 500; }
.share-name { margin: -1px 0 0 20px; font-size: 24px; font-weight: 600; white-space: nowrap; letter-spacing: .2px; }
.share-more { margin-left: auto; margin-right: 17px; }
.rec-pill { display: flex; align-items: center; margin-left: auto; margin-right: 15px; width: 542px; height: 48px; border-radius: 16px; background: #171717; padding-left: 11px; font-size: 24px; font-weight: 500; }
.rec-dot { width: 10px; height: 14px; border-radius: 50%; background: #b84f2e; margin-left: 30px; }
.rec-text { margin-left: 6px; white-space: nowrap; letter-spacing: -.15px; }
.hour { margin-left: 32px; }
.rec-time { margin-left: 11px; }
.rec-chev { margin-left: 16px; }
.rec-div { width: 1px; height: 26px; background: #777; margin-left: 36px; }
.rec-view { margin-left: 20px; }
.rec-grid { margin-left: 8px; }

.stage { position: relative; flex: 1; display: flex; flex-direction: column; min-height: 0; }
.strip { display: flex; flex: none; height: 180px; margin: 12px 0 12px 426px; width: 1987px; background: #1c1c1c; border-radius: 16px; }
.tile { position: relative; flex: none; width: 320px; height: 180px; display: flex; flex-direction: column; }
.tile-name { height: 136px; padding-top: 66px; font-size: 40px; line-height: 48px; text-align: center; font-weight: 400; letter-spacing: -1.5px; white-space: nowrap; }
.tile-label { align-self: flex-start; margin-left: 6px; height: 40px; display: flex; align-items: center; padding: 0 10px 0 2px; background: #181818; border-radius: 10px; font-size: 24px; font-weight: 500; white-space: nowrap; letter-spacing: -.2px; }
.tile-label span { margin-top: -3px; }
.tile-label.plain { padding-left: 7px; padding-right: 8px; }
.tile-label .muted { margin-right: 10px; }
.tile.active::after { content: ""; position: absolute; left: -1px; right: -3px; top: -2px; bottom: -2px; border: 4px solid #7cc35e; border-radius: 0 16px 16px 0; }
.strip-next { width: 60px; height: 180px; margin-left: 7px; background: #0a0a0a; border-radius: 16px; display: flex; align-items: center; justify-content: center; }

.slide { position: relative; flex: 1; margin-left: 351px; width: 2066px; background: #fff; display: flex; color: #000; min-height: 0; }
.slide-dot { position: absolute; right: 8px; top: 8px; width: 11px; height: 11px; border-radius: 50%; background: #c9a53c; }
.slide-left { width: 763px; padding: 116px 0 0 158px; font-family: Lato, "Open Sans", sans-serif; filter: blur(.4px); }
.slide-title { font-size: 89px; line-height: 100px; letter-spacing: -1.4px; white-space: nowrap; }
.slide-bullet { margin-top: 14px; font-size: 57px; line-height: 70px; font-weight: 700; white-space: nowrap; letter-spacing: -.55px; }
.bul { display: inline-block; width: 37px; font-size: 38px; vertical-align: 4px; }
.slide-right { width: 1210px; padding: 180px 0 0 70px; font-family: "Liberation Serif", serif; font-size: 45px; line-height: 53.7px; letter-spacing: -1px; color: #2d2d2d; filter: blur(.55px); }
.ln { text-align: justify; text-align-last: justify; }
.ln.last { text-align-last: left; }
.ln.first { margin-left: -70px; }
.num { display: inline-block; width: 70px; }
.bars { display: inline-block; width: 52px; height: 30px; vertical-align: -2px; }
.bars i { display: block; width: 18px; height: 30px; margin-left: 2px; background: repeating-linear-gradient(90deg, #8a4a4a 0 3px, #fff 3px 6px); }

.pen-btn { position: absolute; left: 54px; bottom: 24px; width: 96px; height: 96px; border-radius: 50%; background: #1e1f21; display: flex; align-items: center; justify-content: center; }

/* toolbar */
.toolbar { display: flex; flex: none; height: 112px; padding-left: 2px; }
.center-tools { display: flex; margin-left: 513px; }
.tool { position: relative; flex: none; display: flex; flex-direction: column; align-items: center; padding-top: 12px; }
.tool-icon { position: relative; height: 48px; display: flex; align-items: center; justify-content: center; }
.tool-label { margin-top: 12px; font-size: 24px; line-height: 30px; color: #a9a9a9; font-weight: 500; white-space: nowrap; }
.tool-count { position: absolute; left: 52px; top: 7px; font-size: 22px; line-height: 30px; color: #a9a9a9; font-weight: 500; }
.chev { position: absolute; top: 14px; }
.chev-audio { left: 78px; }
.chev-video { left: 80px; }
.chev-part { left: 103px; }
.chev-chat { left: 78px; }
.chev-react { left: 71px; }
.w-audio { width: 176px; } .w-video { width: 178px; }
.w-part { width: 208px; } .w-chat { width: 204px; } .w-react { width: 138px; }
.w-share { width: 186px; } .w-ai { width: 168px; } .w-apps { width: 184px; } .w-more { width: 142px; }
.w-leave { width: 120px; margin-left: 528px; }

/* dock */
.dock {
  position: absolute; left: 221px; top: 1688px; width: 2437px; height: 101px;
  display: flex; padding: 13px 0 0 13px; gap: 20px;
  background: #171717; border: 2px solid #3c3c3c; border-radius: 30px;
}
.app { position: relative; flex: none; width: 64px; height: 65px; }
.app svg { display: block; width: 64px; height: 65px; overflow: visible; }
.run { position: absolute; left: 28px; top: 77px; width: 8px; height: 8px; border-radius: 50%; background: #7a7a7a; }
.dock-sep { flex: none; width: 2px; height: 74px; background: #4a4a4a; margin: 0 5px 0 11px; }
.dock-sep.sep2 { margin: 0 2px 0 9px; }
.app.thumb { margin-top: 2px; height: 68px; }
.app.thumb svg { width: 74px; height: 68px; }
.app-trash { margin: -5px 0 0 5px; }
.app-trash svg { height: 76px; }
.cal-mon { font: 700 14px Inter, sans-serif; fill: #fff; }
.cal-day { font: 300 41px Inter, sans-serif; fill: #222; }
.word-w { font: 500 19px Inter, sans-serif; fill: #fff; }
.zoom-word { font: 600 17px Inter, sans-serif; fill: #fff; }
```
